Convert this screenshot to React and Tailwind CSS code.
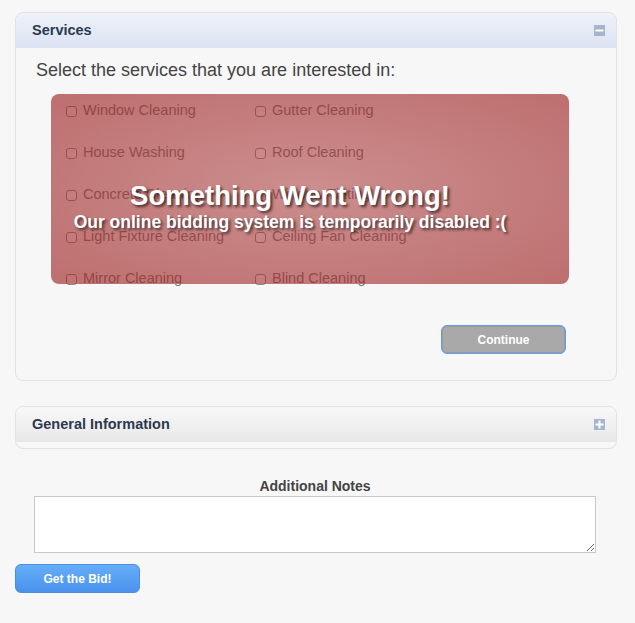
import React from "react";

const services = [
  ["Window Cleaning", "Gutter Cleaning"],
  ["House Washing", "Roof Cleaning"],
  ["Concrete Cleaning", "Window Tinting"],
  ["Light Fixture Cleaning", "Ceiling Fan Cleaning"],
  ["Mirror Cleaning", "Blind Cleaning"],
];

function PanelIcon({ plus }) {
  return (
    <svg width="11" height="11" viewBox="0 0 11 11">
      <rect x="0" y="0" width="11" height="11" fill="#a3b6cc" />
      <rect x="1.5" y="4.5" width="8" height="2" fill="#fff" />
      {plus && <rect x="4.5" y="1.5" width="2" height="8" fill="#fff" />}
    </svg>
  );
}

function Check({ label }) {
  return (
    <div className="flex items-center gap-[6px] h-[42px] pb-[10px]">
      <span className="w-[11px] h-[11px] rounded-[3px] border border-[#888] bg-white mt-[2px]" />
      <span className="text-[14.5px] leading-[18px] text-[#777]">{label}</span>
    </div>
  );
}

export default function App() {
  return (
    <div
      className="min-h-[623px] bg-[#f7f7f7] pt-3 pb-8"
      style={{ fontFamily: '"Liberation Sans", Arial, sans-serif' }}
    >
      {/* Services */}
      <div className="ml-[15px] w-[602px] rounded-lg border border-[#e2e2e2] bg-[#f7f7f7] overflow-hidden">
        <div className="h-[35px] flex items-center justify-between pl-4 pr-[11px] bg-gradient-to-b from-[#eff2f9] to-[#dbe2f2]">
          <span className="text-[14.5px] font-bold text-[#2b3a4f]">Services</span>
          <PanelIcon />
        </div>
        <div className="pt-[11px] pb-[26px]">
          <p className="pl-[20px] text-[18px] leading-[22px] text-[#444]">
            Select the services that you are interested in:
          </p>
          <div className="relative ml-[35px] mt-[18px] w-[518px] h-[190px]">
            <div className="grid grid-cols-[189px_1fr] pl-[15px] -mt-[5px]">
              {services.map(([a, b]) => (
                <React.Fragment key={a}>
                  <Check label={a} />
                  <Check label={b} />
                </React.Fragment>
              ))}
            </div>
            <div className="absolute inset-0 rounded-lg bg-[radial-gradient(ellipse_at_center,rgba(170,60,60,0.56),rgba(160,40,40,0.66))] flex flex-col items-center pt-[86px] pr-[40px] text-white [text-shadow:2px_2px_3px_rgba(0,0,0,0.65)]">
              <div className="text-[27.5px] leading-[32px] font-bold">Something Went Wrong!</div>
              <div className="text-[17.5px] leading-[20px] font-bold">
                Our online bidding system is temporarily disabled :(
              </div>
            </div>
          </div>
          <div className="flex justify-end pr-[50px] mt-[41px]">
            <button className="w-[125px] h-[29px] rounded-[6px] border border-[#5c9ef2] bg-[#a9a9a9] text-white text-[12px] font-bold shadow-[inset_0_0_0_1px_#9a9a9a]">
              Continue
            </button>
          </div>
        </div>
      </div>

      {/* General Information */}
      <div className="ml-[15px] mt-[25px] w-[602px] rounded-lg border border-[#e2e2e2] bg-[#f7f7f7] overflow-hidden">
        <div className="h-[35px] flex items-center justify-between pl-4 pr-[11px] bg-gradient-to-b from-[#f8f8f8] to-[#e8e8e8]">
          <span className="text-[14.5px] font-bold text-[#2b3a4f]">General Information</span>
          <PanelIcon plus />
        </div>
        <div className="h-[6px]" />
      </div>

      <div className="ml-[34px] w-[562px] mt-[28px]">
        <div className="text-center text-[14px] leading-[18px] font-bold text-[#444]">
          Additional Notes
        </div>
        <textarea className="block mt-[1px] w-full h-[57px] border border-[#c8c8c8] bg-white outline-none" />
      </div>

      <button className="ml-[15px] mt-[11px] w-[125px] h-[29px] rounded-[6px] border border-[#4b8ce4] bg-gradient-to-b from-[#66aef8] to-[#4a91ee] text-white text-[12px] font-bold">
        Get the Bid!
      </button>
    </div>
  );
}
